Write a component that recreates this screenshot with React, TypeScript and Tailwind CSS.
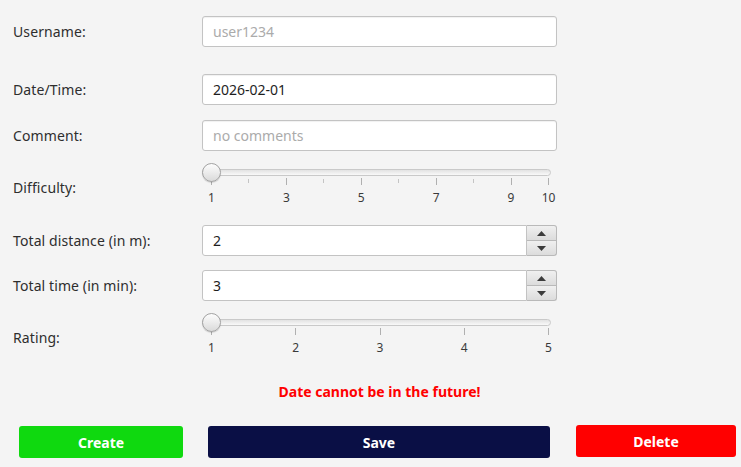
import React from 'react';

const FONT = { fontFamily: '"Noto Sans", "Open Sans", sans-serif' };

interface SliderProps {
    min: number;
    max: number;
    labels: number[];
    ticks: { v: number; major: boolean }[];
}

// track runs from the thumb centre at 9px to 346px
const pos = (v: number, min: number, max: number) => 9 + ((v - min) / (max - min)) * 337;

const Slider: React.FC<SliderProps> = ({ min, max, labels, ticks }) => (
    <div className="relative h-[44px] w-[349px]">
        <div className="absolute left-0 right-0 top-[6px] h-[7px] rounded-full border border-[#c9c9c9] bg-gradient-to-b from-[#e2e2e2] to-[#f9f9f9]" />
        {ticks.map((t) => (
            <div
                key={t.v}
                className={t.major ? 'absolute top-[15px] h-[7px] w-px bg-[#b0b0b0]' : 'absolute top-[16px] h-[4px] w-px bg-[#c4c4c4]'}
                style={{ left: pos(t.v, min, max) }}
            />
        ))}
        {labels.map((l) => (
            <span
                key={l}
                className="absolute top-[27px] -translate-x-1/2 text-[12px] leading-4 text-[#3a3a3a]"
                style={{ left: pos(l, min, max) + 0.5 }}
            >
                {l}
            </span>
        ))}
        <div className="absolute left-0 top-0 size-[19px] rounded-full border border-[#a2a2a2] bg-gradient-to-b from-[#fdfdfd] to-[#dadada] shadow-[0_1px_1px_rgba(0,0,0,0.15)]" />
    </div>
);

const TextInput: React.FC<{ value?: string; placeholder?: string }> = ({ value, placeholder }) => (
    <div className="flex h-[31px] w-[355px] items-center rounded-[3px] border border-[#c3c3c3] bg-white pl-[10px] text-[14px] shadow-[inset_0_1px_1px_rgba(0,0,0,0.06)]">
        {value ? <span className="text-[#1e1e1e]">{value}</span> : <span className="text-[#ababab]">{placeholder}</span>}
    </div>
);

const Arrow: React.FC<{ up?: boolean }> = ({ up }) => (
    <svg width="9" height="5" viewBox="0 0 9 5">
        <path d={up ? 'M0 5 L4.5 0 L9 5 Z' : 'M0 0 L4.5 5 L9 0 Z'} fill="#3c3c3c" />
    </svg>
);

const Spinner: React.FC<{ value: string }> = ({ value }) => (
    <div className="flex h-[31px] w-[355px]">
        <div className="flex flex-1 items-center rounded-l-[3px] border border-[#c3c3c3] bg-white pl-[10px] text-[14px] text-[#1e1e1e]">
            {value}
        </div>
        <div className="flex w-[30px] flex-col">
            <div className="flex h-[16px] items-center justify-center rounded-tr-[3px] border border-l-0 border-[#b9b9b9] bg-gradient-to-b from-[#f0f0f0] to-[#dcdcdc]">
                <Arrow up />
            </div>
            <div className="flex h-[15px] items-center justify-center rounded-br-[3px] border border-l-0 border-t-0 border-[#b9b9b9] bg-gradient-to-b from-[#f0f0f0] to-[#dcdcdc]">
                <Arrow />
            </div>
        </div>
    </div>
);

const Row: React.FC<{ label: string; className: string; labelClass?: string; children: React.ReactNode }> = ({ label, className, labelClass, children }) => (
    <div className={`flex items-center ${className}`}>
        <div className={`w-[202px] pl-[13px] text-[14px] tracking-[0.1px] text-[#2e2e2e] ${labelClass ?? ''}`}>{label}</div>
        {children}
    </div>
);

const difficultyTicks = [1, 2, 3, 4, 5, 6, 7, 8, 9, 10].map((v) => ({ v, major: v % 2 === 1 || v === 10 }));
const ratingTicks = [1, 2, 3, 4, 5].map((v) => ({ v, major: true }));

export default function App() {
    return (
        <div className="h-[467px] w-[741px] overflow-hidden bg-[#f4f4f4] pt-[16px]" style={FONT}>
            <Row label="Username:" className="h-[31px]">
                <TextInput placeholder="user1234" />
            </Row>
            <Row label="Date/Time:" className="mt-[27px] h-[31px]">
                <TextInput value="2026-02-01" />
            </Row>
            <Row label="Comment:" className="mt-[15px] h-[31px]">
                <TextInput placeholder="no comments" />
            </Row>
            <Row label="Difficulty:" className="mt-[12px] h-[44px]" labelClass="pt-[4px]">
                <Slider min={1} max={10} labels={[1, 3, 5, 7, 9, 10]} ticks={difficultyTicks} />
            </Row>
            <Row label="Total distance (in m):" className="mt-[18px] h-[31px]">
                <Spinner value="2" />
            </Row>
            <Row label="Total time (in min):" className="mt-[14px] h-[31px]">
                <Spinner value="3" />
            </Row>
            <Row label="Rating:" className="mt-[12px] h-[44px]" labelClass="pt-[4px]">
                <Slider min={1} max={5} labels={[1, 2, 3, 4, 5]} ticks={ratingTicks} />
            </Row>

            <div className="mt-[25px] flex">
                <div className="w-[202px]" />
                <div className="w-[355px] text-center text-[14px] font-bold leading-5 text-[#ff0000]">
                    Date cannot be in the future!
                </div>
            </div>

            <div className="mt-[24px] flex items-start">
                <button className="ml-[19px] h-[32px] w-[164px] rounded-[3px] bg-[#0fd90f] text-[14px] font-bold text-white">
                    Create
                </button>
                <button className="ml-[25px] h-[32px] w-[342px] rounded-[3px] bg-[#0a0f45] text-[14px] font-bold text-white">
                    Save
                </button>
                <button className="ml-[26px] -mt-px h-[32px] w-[160px] rounded-[3px] bg-[#ff0000] text-[14px] font-bold text-white">
                    Delete
                </button>
            </div>
        </div>
    );
}
